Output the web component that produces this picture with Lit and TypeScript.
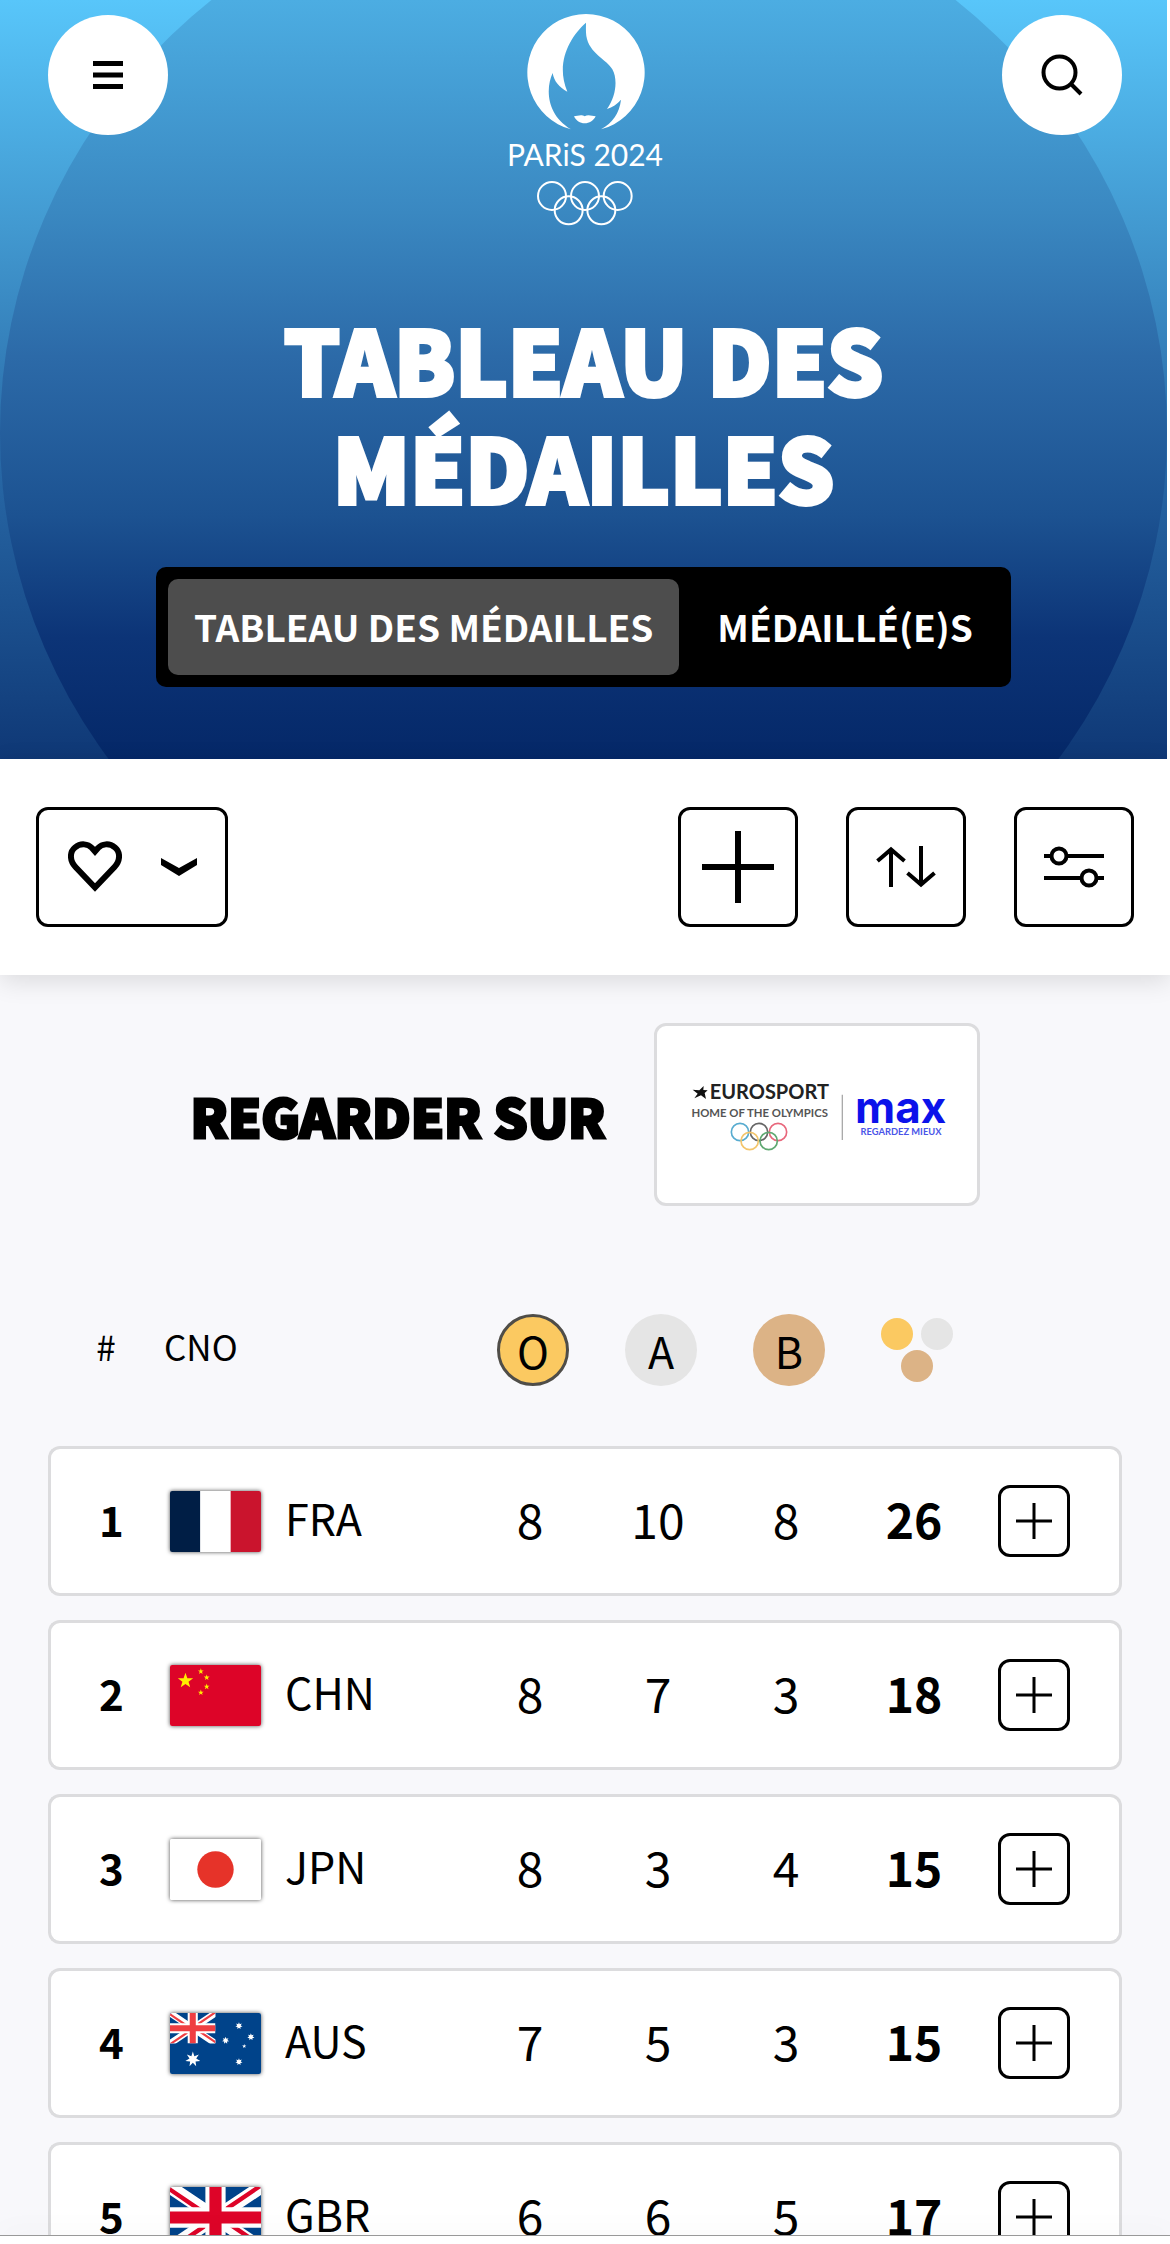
import { LitElement, html, css, svg } from "lit";
import { customElement, state } from "lit/decorators.js";
import { classMap } from "lit/directives/class-map.js";

type Code = "FRA" | "CHN" | "JPN" | "AUS" | "GBR";

interface Standing {
  rank: number;
  code: Code;
  gold: number;
  silver: number;
  bronze: number;
  total: number;
}

const STANDINGS: Standing[] = [
  { rank: 1, code: "FRA", gold: 8, silver: 10, bronze: 8, total: 26 },
  { rank: 2, code: "CHN", gold: 8, silver: 7, bronze: 3, total: 18 },
  { rank: 3, code: "JPN", gold: 8, silver: 3, bronze: 4, total: 15 },
  { rank: 4, code: "AUS", gold: 7, silver: 5, bronze: 3, total: 15 },
  { rank: 5, code: "GBR", gold: 6, silver: 6, bronze: 5, total: 17 },
];

/** Points of a regular star centred on (cx, cy). */
const star = (cx: number, cy: number, r: number, tips = 5, inner = 0.4) =>
  Array.from({ length: tips * 2 }, (_, i) => {
    const radius = i % 2 ? r * inner : r;
    const a = (Math.PI * i) / tips - Math.PI / 2;
    return `${(cx + radius * Math.cos(a)).toFixed(2)},${(cy + radius * Math.sin(a)).toFixed(2)}`;
  }).join(" ");

/** Union flag on a 90 x 60 field. */
const union = (red: string) => svg`
  <path fill="#00438a" d="M0 0h90v60H0z"/>
  <path stroke="#fff" stroke-width="13" d="M0 0l90 60M90 0L0 60"/>
  <path fill=${red} d="M0 0L36 24h-8L0 5zM90 0v1L56 24h-8L84 0zM90 60L54 36h8l28 19zM0 60v-1l34-23h8L6 60z"/>
  <path stroke="#fff" stroke-width="20" d="M45 0v60M0 30h90"/>
  <path stroke=${red} stroke-width="12" d="M45 0v60M0 30h90"/>`;

const FLAGS = {
  FRA: svg`<path fill="#001e45" d="M0 0h30v60H0z"/><path fill="#fff" d="M30 0h30v60H30z"/><path fill="#ca142d" d="M60 0h30v60H60z"/>`,
  CHN: svg`<path fill="#dd0428" d="M0 0h90v60H0z"/>
    <g fill="#ffed00">
      <polygon points=${star(15.3, 15.5, 8)}/>
      <polygon points=${star(30.5, 6.3, 3)}/>
      <polygon points=${star(36.3, 12.3, 3)}/>
      <polygon points=${star(36.3, 21.3, 3)}/>
      <polygon points=${star(30.5, 27.2, 3)}/>
    </g>`,
  JPN: svg`<path fill="#fff" d="M0 0h90v60H0z"/><circle cx="45" cy="30" r="18" fill="#e63329"/>`,
  AUS: svg`<path fill="#00438a" d="M0 0h90v60H0z"/>
    <svg width="45" height="30" viewBox="0 0 90 60">${union("#ef3e42")}</svg>
    <g fill="#fff">
      <polygon points=${star(22.6, 45.5, 7.6, 7, 0.45)}/>
      <polygon points=${star(68.2, 12.6, 3.6, 7, 0.5)}/>
      <polygon points=${star(55, 27, 3.6, 7, 0.5)}/>
      <polygon points=${star(80, 23.6, 3.6, 7, 0.5)}/>
      <polygon points=${star(73.4, 32.6, 2.2)}/>
      <polygon points=${star(68.2, 48, 3.6, 7, 0.5)}/>
    </g>`,
  GBR: union("#de0428"),
};

const plus = (size: number, weight: number) => html`
  <svg width=${size} height=${size} viewBox="0 0 ${size} ${size}" aria-hidden="true">
    <path stroke="#000" stroke-width=${weight} d="M${size / 2} 0v${size}M0 ${size / 2}h${size}"/>
  </svg>`;

@customElement("medal-header")
export class MedalHeader extends LitElement {
  @state() private tab = 0;

  static styles = css`
    :host {
      display: block;
      position: relative;
      margin-right: 3px;
      padding-bottom: 72px;
      color: #fff;
      background: linear-gradient(#58c6fa, #4299d0 30%, #2767a5 62%, #0f3876);
    }
    .disc {
      position: absolute;
      inset: 0;
      clip-path: ellipse(50% 74% at 50% 57%);
      background: linear-gradient(#4cade2, #3a88c1 28%, #2c6aa8 47%, #1c5291 68%, #0c3477 84%, #052868);
    }
    .bar,
    .title,
    .tabs {
      position: relative;
    }
    .bar {
      display: flex;
      justify-content: space-between;
      align-items: flex-start;
      padding: 15px 45px 15px 48px;
    }
    .round {
      display: grid;
      place-items: center;
      width: 120px;
      height: 120px;
      padding: 0;
      border: 0;
      border-radius: 50%;
      background: #fff;
    }
    .brand {
      display: block;
      height: 210px;
    }
    .emblem {
      overflow: visible;
    }
    .wordmark {
      font-family: Lato, sans-serif;
      font-size: 90px;
      font-weight: 400;
      fill: #fff;
    }
    .title {
      margin: 0 auto;
      padding: 64px 160px 47px;
      font-size: 88px;
      line-height: 108px;
      font-weight: 900;
      text-align: center;
      -webkit-text-stroke: 4px #fff;
    }
    .tabs {
      display: flex;
      gap: 12px;
      width: fit-content;
      margin: 0 auto;
      padding: 12px;
      border-radius: 10px;
      background: #000;
    }
    .tab {
      height: 96px;
      padding: 0 26px 2px;
      border: 0;
      border-radius: 10px;
      background: none;
      color: #fff;
      font: inherit;
      font-size: 37px;
      font-weight: 700;
    }
    .tab.on {
      background: #4d4d4d;
    }
  `;

  render() {
    return html`
      <div class="disc"></div>
      <div class="bar">
        <button class="round" aria-label="Menu">
          <svg width="30" height="28" viewBox="0 0 30 28" aria-hidden="true">
            <path stroke="#000" stroke-width="5" d="M0 2.500h30M0 14h30M0 25.500h30"/>
          </svg>
        </button>
        <a class="brand" href="#">
          <svg class="emblem" width="190" height="210" viewBox="150 45 570 630">
            <path fill="#fff" d="M393 388A176 176 0 1 1 483 388C518 368 538 340 543 299C532 312 517 322 501 327C528 290 534 238 517 208C500 178 447 160 439 108C437 94 438 80 438 68C388 112 346 190 382 275C358 262 342 244 338 219C318 262 316 342 393 388Z"/>
            <path fill="#fff" d="M402 349C412 348 424 342 434 349C444 342 456 348 467 349C460 363 448 370 434 370S409 363 402 349Z"/>
            <text class="wordmark" x="435" y="497" text-anchor="middle">PARiS 2024</text>
            <g fill="none" stroke="#fff" stroke-width="6">
              <circle cx="336" cy="588" r="42"/><circle cx="435" cy="588" r="42"/><circle cx="533" cy="588" r="42"/>
              <circle cx="386" cy="631" r="42"/><circle cx="484" cy="631" r="42"/>
            </g>
          </svg>
        </a>
        <button class="round" aria-label="Rechercher">
          <svg width="42" height="42" viewBox="0 0 42 42" aria-hidden="true">
            <g fill="none" stroke="#000" stroke-width="4"><circle cx="18.500" cy="18.500" r="16"/><path d="M30 30l10 10"/></g>
          </svg>
        </button>
      </div>
      <h1 class="title">TABLEAU DES MÉDAILLES</h1>
      <div class="tabs" role="tablist">
        ${["TABLEAU DES MÉDAILLES", "MÉDAILLÉ(E)S"].map(
          (label, i) => html`<button
            class=${classMap({ tab: true, on: this.tab === i })}
            role="tab"
            aria-selected=${this.tab === i}
            @click=${() => (this.tab = i)}
          >${label}</button>`
        )}
      </div>
    `;
  }
}

@customElement("filter-bar")
export class FilterBar extends LitElement {
  static styles = css`
    :host {
      display: flex;
      gap: 48px;
      padding: 48px 36px;
      position: relative;
      background: #fff;
      box-shadow: 0 6px 24px rgba(0, 0, 0, 0.12);
    }
    .tool {
      display: grid;
      place-items: center;
      box-sizing: border-box;
      width: 120px;
      height: 120px;
      padding: 0;
      border: 3px solid #000;
      border-radius: 12px;
      background: #fff;
    }
    .favourite {
      display: flex;
      align-items: center;
      justify-content: center;
      gap: 39px;
      width: 192px;
      margin-right: auto;
    }
  `;

  render() {
    return html`
      <button class="tool favourite" aria-label="Favoris" aria-haspopup="true">
        <svg width="54" height="52" viewBox="0 0 54 52" aria-hidden="true">
          <path fill="none" stroke="#000" stroke-width="6" d="M27 46.500L7.500 26C1.500 19.500 1.500 11 7 6.500C13 1.500 20 3 24 7L27 10.500L30 7C34 3 41 1.500 47 6.500C52.500 11 52.500 19.500 46.500 26Z"/>
        </svg>
        <svg width="36" height="18" viewBox="0 0 36 18" aria-hidden="true">
          <path fill="#000" d="M0 0L18 10L36 0V7L18 18L0 7Z"/>
        </svg>
      </button>
      <button class="tool" aria-label="Tout déplier">${plus(72, 6)}</button>
      <button class="tool" aria-label="Trier">
        <svg width="72" height="72" viewBox="0 0 72 72" aria-hidden="true">
          <path fill="none" stroke="#000" stroke-width="4" d="M21 56V19M7.500 30L21 18.500L34.500 30M51 15v38M37.500 42L51 53.500L64.500 42"/>
        </svg>
      </button>
      <button class="tool" aria-label="Filtrer">
        <svg width="72" height="72" viewBox="0 0 72 72" aria-hidden="true">
          <g fill="#fff" stroke="#000" stroke-width="4">
            <path d="M6 25h60M6 47h60"/><circle cx="21" cy="25" r="7.500"/><circle cx="51" cy="47" r="7.500"/>
          </g>
        </svg>
      </button>
    `;
  }
}

@customElement("watch-banner")
export class WatchBanner extends LitElement {
  static styles = css`
    :host {
      display: flex;
      justify-content: center;
      align-items: center;
      gap: 48px;
      padding: 48px 36px;
    }
    .label {
      margin: 0;
      font-size: 53px;
      line-height: 72px;
      font-weight: 900;
      -webkit-text-stroke: 3px #000;
    }
    .card {
      display: block;
      border: 3px solid #dcdcde;
      border-radius: 12px;
      overflow: hidden;
      background: #fff;
    }
    .art {
      display: block;
      font-family: Lato, sans-serif;
    }
    .euro {
      font-size: 60px;
      font-weight: 700;
      fill: #222;
    }
    .home {
      font-size: 34px;
      font-weight: 700;
      fill: #555;
    }
    .max {
      font-family: Inter, sans-serif;
      font-size: 132px;
      font-weight: 700;
      fill: #0b12ea;
    }
    .slogan {
      font-size: 28px;
      font-weight: 700;
      fill: #4a55e8;
    }
  `;

  render() {
    return html`
      <h2 class="label">REGARDER SUR</h2>
      <a class="card" href="#">
        <svg class="art" width="320" height="177" viewBox="-15 -72 960 531">
          <polygon fill="#111" points="92,119 112,121 125,108 124,120 137,121 128,129 132,147 117,136 97,145 107,131"/>
          <text class="euro" x="322" y="148" text-anchor="middle">EUROSPORT</text>
          <text class="home" x="293" y="201" text-anchor="middle">HOME OF THE OLYMPICS</text>
          <g fill="none" stroke-width="5">
            <circle cx="234" cy="246" r="26" stroke="#58acd0"/><circle cx="291" cy="246" r="26" stroke="#666"/>
            <circle cx="348" cy="246" r="26" stroke="#e8677c"/><circle cx="263" cy="273" r="26" stroke="#f3c56c"/>
            <circle cx="320" cy="273" r="26" stroke="#5fa871"/>
          </g>
          <path stroke="#aaa" stroke-width="4" d="M541 134v136"/>
          <text class="max" x="716" y="220" text-anchor="middle">max</text>
          <text class="slogan" x="717" y="254" text-anchor="middle">REGARDEZ MIEUX</text>
        </svg>
      </a>
    `;
  }
}

@customElement("medal-table")
export class MedalTable extends LitElement {
  static styles = css`
    :host {
      display: block;
      padding: 0 48px;
    }
    .table {
      width: 100%;
      table-layout: fixed;
      border-collapse: separate;
      border-spacing: 0 24px;
    }
    .c-rank {
      width: 112px;
    }
    .c-medal {
      width: 128px;
    }
    .c-more {
      width: 141px;
    }
    .head,
    .cell {
      box-sizing: border-box;
      padding: 0;
    }
    .head {
      height: 144px;
      font-size: 35px;
      font-weight: 400;
    }
    .head.rank,
    .head.noc {
      padding: 0 0 10px 4px;
    }
    .head.noc {
      text-align: left;
    }
    .medal {
      display: grid;
      place-items: center;
      box-sizing: border-box;
      width: 72px;
      height: 72px;
      margin: 0 auto;
      padding: 0;
      border: 0;
      border-radius: 50%;
      font: inherit;
      font-size: 43px;
      line-height: 66px;
      color: #000;
      background: none;
    }
    .gold {
      border: 3px solid #4f4d48;
      background: #fbc961;
    }
    .silver {
      background: #e5e5e5;
    }
    .bronze {
      background: #dcb386;
    }
    .cell {
      height: 150px;
      border: solid #dcdcde;
      border-width: 3px 0;
      background: #fff;
      text-align: center;
    }
    .cell.rank {
      padding: 0 0 6px 12px;
      border-left-width: 3px;
      border-radius: 12px 0 0 12px;
      font-size: 42px;
      font-weight: 700;
    }
    .cell.count {
      padding: 0 6px 6px 0;
      font-size: 48px;
    }
    .cell.total {
      font-weight: 700;
    }
    .cell.more {
      padding: 0 48px 0 17px;
      border-right-width: 3px;
      border-radius: 0 12px 12px 0;
    }
    .country {
      display: flex;
      align-items: center;
      gap: 24px;
      padding-left: 10px;
      font-size: 43px;
    }
    .code {
      padding-bottom: 8px;
    }
    .flag {
      flex: none;
      border-radius: 2px;
      box-shadow: 0 0 4px rgba(0, 0, 0, 0.7);
    }
    .expand {
      display: grid;
      place-items: center;
      box-sizing: border-box;
      width: 72px;
      height: 72px;
      padding: 0;
      border: 3px solid #000;
      border-radius: 12px;
      background: #fff;
    }
  `;

  render() {
    return html`
      <table class="table">
        <colgroup>
          <col class="c-rank"><col><col class="c-medal"><col class="c-medal"><col class="c-medal"><col class="c-medal"><col class="c-more">
        </colgroup>
        <thead>
          <tr>
            <th class="head rank" scope="col">#</th>
            <th class="head noc" scope="col">CNO</th>
            <th class="head" scope="col"><button class="medal gold">O</button></th>
            <th class="head" scope="col"><button class="medal silver">A</button></th>
            <th class="head" scope="col"><button class="medal bronze">B</button></th>
            <th class="head" scope="col">
              <button class="medal" aria-label="Total">
                <svg width="72" height="64" viewBox="0 0 72 64" aria-hidden="true">
                  <circle cx="16" cy="16" r="16" fill="#fbc961"/>
                  <circle cx="56" cy="16" r="16" fill="#e5e5e5"/>
                  <circle cx="36" cy="48" r="16" fill="#dcb386"/>
                </svg>
              </button>
            </th>
            <td></td>
          </tr>
        </thead>
        <tbody>
          ${STANDINGS.map(
            (s) => html`<tr>
              <td class="cell rank">${s.rank}</td>
              <td class="cell">
                <div class="country">
                  <svg class="flag" width="91" height="61" viewBox="0 0 90 60" preserveAspectRatio="none" aria-hidden="true">${FLAGS[s.code]}</svg>
                  <span class="code">${s.code}</span>
                </div>
              </td>
              <td class="cell count">${s.gold}</td>
              <td class="cell count">${s.silver}</td>
              <td class="cell count">${s.bronze}</td>
              <td class="cell count total">${s.total}</td>
              <td class="cell more"><button class="expand" aria-label="Détails ${s.code}">${plus(36, 3)}</button></td>
            </tr>`
          )}
        </tbody>
      </table>
    `;
  }
}

@customElement("app-root")
export class AppRoot extends LitElement {
  static styles = css`
    :host {
      display: flex;
      flex-direction: column;
      height: 100vh;
      background: #fff;
      color: #000;
      font-family: "Noto Sans CJK JP", "Noto Sans", sans-serif;
    }
    .page {
      flex: 1;
      min-height: 0;
      overflow: hidden auto;
      scrollbar-width: none;
    }
    .results {
      background: #f8f8fb;
    }
    .dock {
      position: relative;
      height: 8px;
      border-top: 1px solid #999;
      background: #fff;
      box-shadow: 0 0 30px rgba(0, 0, 0, 0.06);
    }
  `;

  render() {
    return html`
      <main class="page">
        <medal-header></medal-header>
        <filter-bar></filter-bar>
        <section class="results">
          <watch-banner></watch-banner>
          <medal-table></medal-table>
        </section>
      </main>
      <footer class="dock"></footer>
    `;
  }
}
